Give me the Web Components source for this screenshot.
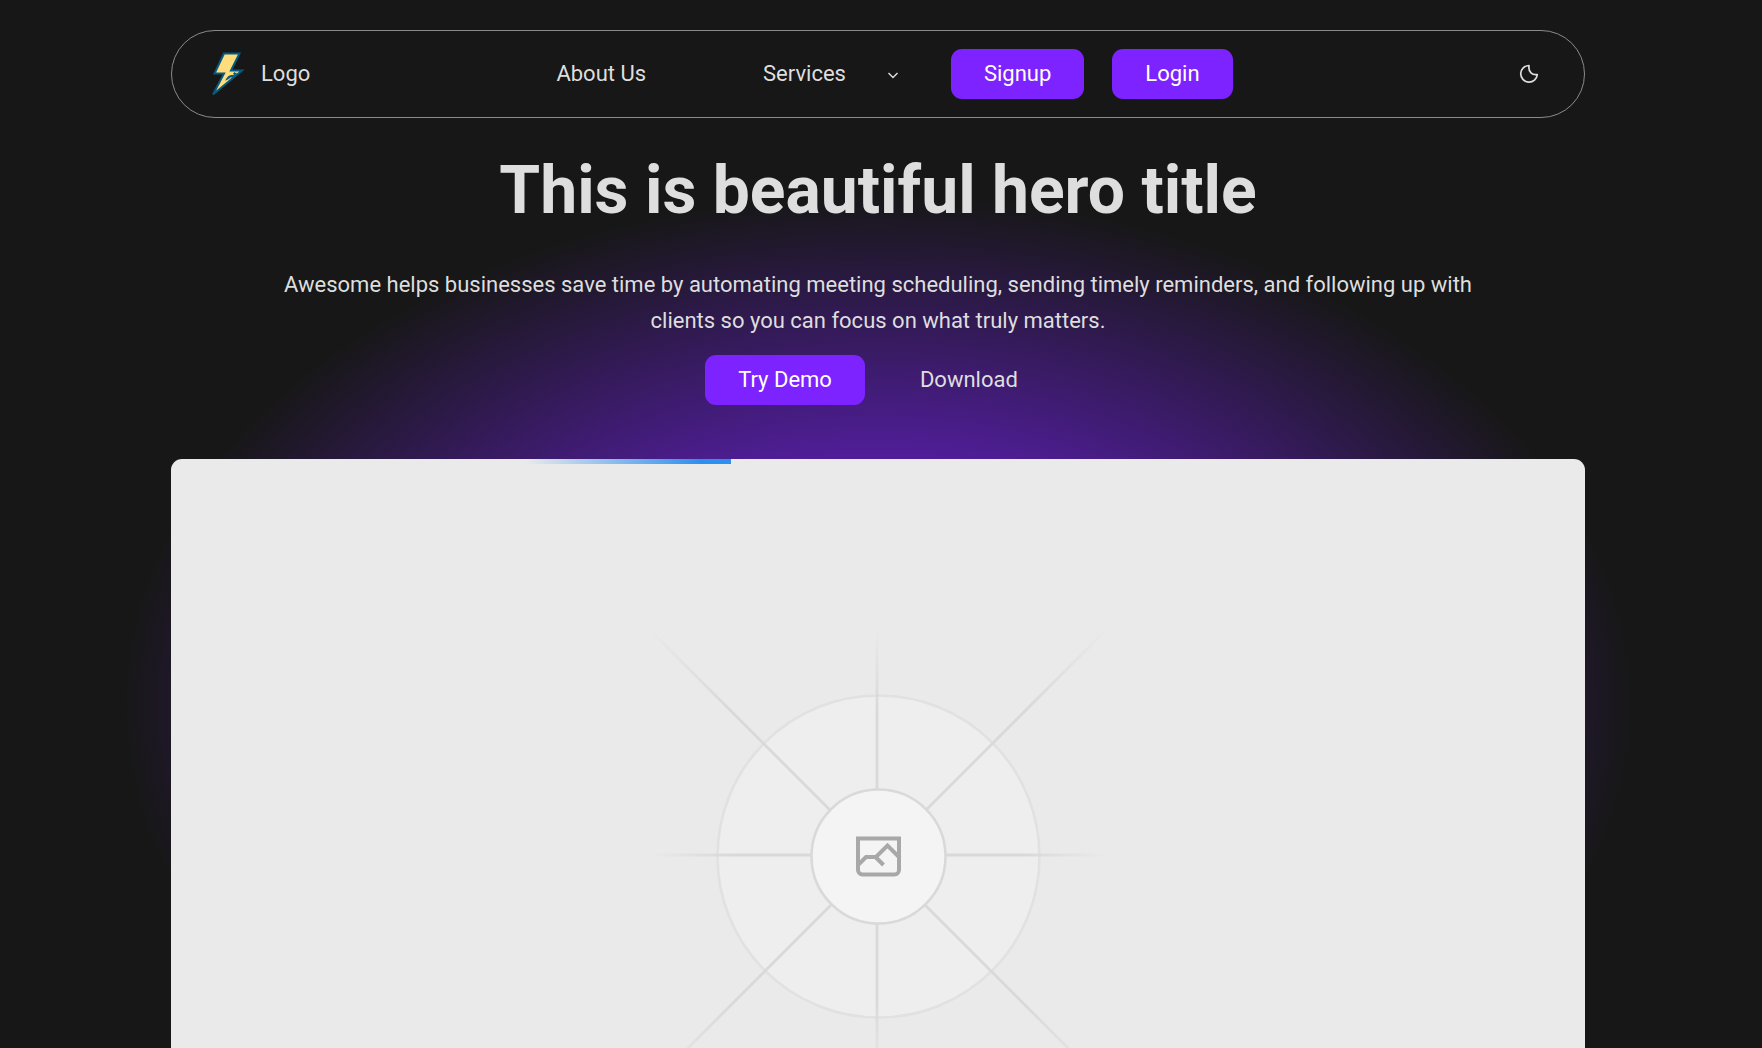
<!DOCTYPE html>
<html lang="en">
<head>
<meta charset="utf-8">
<title>Hero</title>
<style>
  body {
    margin: 0;
    height: 100vh;
    overflow: hidden;
    background: #171717;
    color: #dedede;
    font-family: Roboto, sans-serif;
    font-size: 22px;
    line-height: 36px;
  }
</style>
</head>
<body>
<landing-page>
  <nav-bar slot="header">
    <app-logo slot="brand">Logo</app-logo>
    <action-link>About Us</action-link>
    <nav-menu>Services</nav-menu>
    <app-button>Signup</app-button>
    <app-button>Login</app-button>
    <theme-toggle slot="end"></theme-toggle>
  </nav-bar>
  <hero-section>
    <span slot="title">This is beautiful hero title</span>
    <span slot="text">Awesome helps businesses save time by automating meeting scheduling, sending timely reminders, and following up with clients so you can focus on what truly matters.</span>
    <app-button slot="actions">Try Demo</app-button>
    <action-link slot="actions">Download</action-link>
  </hero-section>
  <image-placeholder></image-placeholder>
</landing-page>

<script>
// Shared helper: puts the markup of an element in its open shadow root
function render(host, html) {
  const template = document.createElement("template");
  template.innerHTML = html;
  host.attachShadow({ mode: "open" });
  host.shadowRoot.appendChild(template.content.cloneNode(true));
}

class LandingPage extends HTMLElement {
  constructor() {
    super();
    render(this, `
      <style>
        :host {
          display: block;
          height: 100vh;
          overflow: hidden;
          box-sizing: border-box;
          padding: 30px 177px 0 171px;
          background: radial-gradient(ellipse 756px 510px at calc(50% - 3px) 704px,
            rgba(125, 35, 255, 1) 8%, rgba(125, 35, 255, 0));
        }
      </style>
      <slot name="header"></slot>
      <main><slot></slot></main>
    `);
  }
}

class NavBar extends HTMLElement {
  constructor() {
    super();
    render(this, `
      <style>
        header {
          display: grid;
          grid-template-columns: 1fr auto 1fr;
          align-items: center;
          height: 88px;
          box-sizing: border-box;
          padding: 0 40px;
          border: 1px solid #8b8b8b;
          border-radius: 44px;
        }
        nav {
          display: flex;
          align-items: center;
          gap: 28px;
        }
        .end {
          justify-self: end;
        }
      </style>
      <header>
        <slot name="brand"></slot>
        <nav><slot></slot></nav>
        <div class="end"><slot name="end"></slot></div>
      </header>
    `);
  }
}

class AppLogo extends HTMLElement {
  constructor() {
    super();
    render(this, `
      <style>
        :host {
          display: flex;
          align-items: center;
          gap: 16px;
        }
        svg {
          display: block;
        }
      </style>
      <svg width="33" height="44" viewBox="1 0 33 44" aria-hidden="true">
        <path d="M13 1.500h15.500L20 18.500H31L2 42.500 13 21.500H3.500z" fill="#ffdc7c" stroke="#045a80" stroke-width="2"/>
        <path d="M15.500 27.500c1.500-3 4-4 5.500-4l-3.500 3zM20.500 25.500l5-4.500M24 20.500l-1.500 1.500" fill="none" stroke="#045a80" stroke-width="1.200"/>
      </svg>
      <span><slot></slot></span>
    `);
  }
}

class AppButton extends HTMLElement {
  constructor() {
    super();
    render(this, `
      <style>
        :host {
          display: block;
        }
        button {
          display: block;
          height: 50px;
          padding: 0 33px;
          border: 0;
          border-radius: 11px;
          background: #7d23ff;
          color: #fff;
          font: inherit;
          cursor: pointer;
        }
      </style>
      <button type="button"><slot></slot></button>
    `);
  }
}

class ActionLink extends HTMLElement {
  constructor() {
    super();
    render(this, `
      <style>
        :host {
          display: block;
        }
        a {
          display: block;
          padding: 7px 33px;
          color: inherit;
          text-decoration: none;
        }
      </style>
      <a href="#"><slot></slot></a>
    `);
  }
}

class NavMenu extends HTMLElement {
  constructor() {
    super();
    render(this, `
      <style>
        :host {
          display: block;
          padding: 0 23px;
        }
        button {
          display: flex;
          align-items: center;
          gap: 40px;
          padding: 7px 0 7px 33px;
          border: 0;
          background: none;
          color: inherit;
          font: inherit;
          cursor: pointer;
        }
        svg {
          display: block;
        }
      </style>
      <button type="button" aria-haspopup="true">
        <span><slot></slot></span>
        <svg width="14" height="14" viewBox="0 0 14 14" fill="none" stroke="currentColor" stroke-width="1.400" aria-hidden="true">
          <path d="M2.500 6l4.500 4.500L11.500 6"/>
        </svg>
      </button>
    `);
  }
}

class ThemeToggle extends HTMLElement {
  constructor() {
    super();
    render(this, `
      <style>
        :host {
          display: block;
        }
        button {
          display: block;
          padding: 4px;
          border: 0;
          background: none;
          color: inherit;
          cursor: pointer;
        }
        svg {
          display: block;
        }
      </style>
      <button type="button" aria-label="Toggle theme">
        <svg width="22" height="22" viewBox="0 0 22 22" fill="none" stroke="currentColor" stroke-width="1.700" stroke-linejoin="round" aria-hidden="true">
          <path d="M11 2.500A8.300 8.300 0 1 0 19.300 11.500C14.500 12.500 10 9 11 2.500z"/>
        </svg>
      </button>
    `);
  }
}

class HeroSection extends HTMLElement {
  constructor() {
    super();
    render(this, `
      <style>
        section {
          display: flex;
          flex-direction: column;
          align-items: center;
          padding: 33px 96px 54px;
          text-align: center;
        }
        h1 {
          margin: 0 0 36px;
          font-size: 66px;
          line-height: 80px;
          font-weight: 700;
        }
        p {
          margin: 0 0 16px;
        }
        .actions {
          display: flex;
          align-items: center;
          gap: 22px;
        }
      </style>
      <section>
        <h1><slot name="title"></slot></h1>
        <p><slot name="text"></slot></p>
        <div class="actions"><slot name="actions"></slot></div>
      </section>
    `);
  }
}

class ImagePlaceholder extends HTMLElement {
  constructor() {
    super();
    render(this, `
      <style>
        :host {
          display: block;
          position: relative;
          overflow: hidden;
          border-radius: 11px;
          background: #eaeaea;
        }
        svg {
          display: block;
          margin: 0 auto;
        }
        /* loading bar that runs over the top edge */
        .progress {
          position: absolute;
          top: 0;
          left: 25%;
          width: 206px;
          height: 5px;
          background: linear-gradient(to right, rgba(46, 144, 238, 0), #2e90ee 85%);
        }
      </style>
      <svg width="794" height="794" viewBox="-397 -397 794 794" fill="none" role="img" aria-label="Image placeholder">
        <defs>
          <radialGradient id="fade" gradientUnits="userSpaceOnUse" cx="0" cy="0" r="228">
            <stop offset="0.640" stop-color="#d9d9d9"/>
            <stop offset="1" stop-color="#d9d9d9" stop-opacity="0"/>
          </radialGradient>
          <radialGradient id="fade-diagonal" gradientUnits="userSpaceOnUse" cx="0" cy="0" r="324">
            <stop offset="0.640" stop-color="#d9d9d9"/>
            <stop offset="1" stop-color="#d9d9d9" stop-opacity="0"/>
          </radialGradient>
        </defs>
        <circle cx="0.500" cy="0.500" r="161" fill="#eee" stroke="#e1e1e1" stroke-width="2.600"/>
        <path d="M-1-228V228M-228-1H228" stroke="url(#fade)" stroke-width="2.800"/>
        <path d="M-228-226L228 230M228-226L-228 230" stroke="url(#fade-diagonal)" stroke-width="2.800"/>
        <circle cx="0.500" cy="0.500" r="67" fill="#f4f4f4" stroke="#d9d9d9" stroke-width="2.600"/>
        <path d="M-20-17.500h41v31.500a4.500 4.500 0 0 1-4.500 4.500h-32a4.500 4.500 0 0 1-4.500-4.500zM-20 9l8-8H-2L9.500-10.500 22 2M-2.500 1l8 8" stroke="#a8a8a8" stroke-width="4"/>
      </svg>
      <div class="progress" role="progressbar" aria-label="Loading"></div>
    `);
  }
}

customElements.define("landing-page", LandingPage);
customElements.define("nav-bar", NavBar);
customElements.define("app-logo", AppLogo);
customElements.define("app-button", AppButton);
customElements.define("action-link", ActionLink);
customElements.define("nav-menu", NavMenu);
customElements.define("theme-toggle", ThemeToggle);
customElements.define("hero-section", HeroSection);
customElements.define("image-placeholder", ImagePlaceholder);
</script>
</body>
</html>
